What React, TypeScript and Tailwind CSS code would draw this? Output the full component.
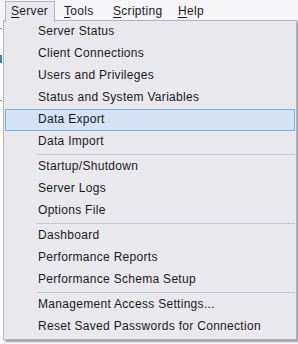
import React from "react";

type Entry = { label: string } | "sep";

const entries: Entry[] = [
  { label: "Server Status" },
  { label: "Client Connections" },
  { label: "Users and Privileges" },
  { label: "Status and System Variables" },
  { label: "Data Export" },
  { label: "Data Import" },
  "sep",
  { label: "Startup/Shutdown" },
  { label: "Server Logs" },
  { label: "Options File" },
  "sep",
  { label: "Dashboard" },
  { label: "Performance Reports" },
  { label: "Performance Schema Setup" },
  "sep",
  { label: "Management Access Settings..." },
  { label: "Reset Saved Passwords for Connection" },
];

const topMenus = [
  { first: "T", rest: "ools", w: "w-[49px]" },
  { first: "S", rest: "cripting", w: "w-[65px]" },
  { first: "H", rest: "elp", w: "w-[40px]" },
];

export default function App() {
  const active = "Data Export";

  return (
    <div
      className="relative w-[298px] h-[344px] overflow-hidden bg-white text-[12px] tracking-[0.3px] text-[#1a1a1a]"
      style={{ fontFamily: '"Liberation Sans", Arial, sans-serif' }}
    >
      {/* menu bar */}
      <div className="flex h-[20px] bg-[#f5f4f7] pl-[5px] pt-[1px]">
        <div className="relative z-20 w-[50px] h-[21px] bg-[#e8e8ed] border border-b-0 border-[#b4b4c0] pl-[5px] pt-[3px] leading-none">
          <span className="underline underline-offset-2">S</span>erver
        </div>
        {topMenus.map((m) => (
          <div key={m.rest} className={`${m.w} pl-[9px] pt-[4px] leading-none`}>
            <span className="underline underline-offset-2">{m.first}</span>
            {m.rest}
          </div>
        ))}
      </div>

      {/* background app strip */}
      <div className="absolute left-0 top-[55px] w-[2px] h-[8px] bg-[#3b82d6]" />
      <div className="absolute left-0 top-[28px] w-[2px] h-[1px] bg-[#888]" />
      <div className="absolute left-0 top-[100px] w-[2px] h-[1px] bg-[#888]" />

      {/* dropdown */}
      <div className="absolute left-[3px] top-[20px] w-[294px] h-[320px] bg-[#e8e8ed] border border-[#b4b4c0] shadow-[2px_2px_2px_rgba(0,0,0,0.4)] z-10 flex flex-col">
        {entries.map((e, i) =>
          e === "sep" ? (
            <div key={i} className="h-[3px] flex items-center pl-[33px] pr-[1px]">
              <div className="h-[1px] w-full bg-[#c6c6d0]" />
            </div>
          ) : (
            <div
              key={i}
              className={`h-[22px] flex items-center mx-[1px] ${
                e.label === active
                  ? "bg-[#d1e3f4] border border-[#7eb1e8] pl-[32px]"
                  : "pl-[33px]"
              }`}
            >
              <span className="leading-none -mt-[3px]">{e.label}</span>
            </div>
          )
        )}
      </div>
    </div>
  );
}
